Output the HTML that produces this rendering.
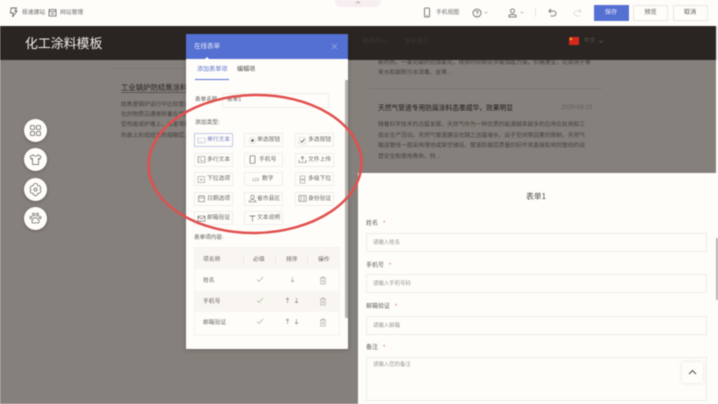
<!DOCTYPE html>
<html lang="zh-CN"><head><meta charset="utf-8"><title>化工涂料模板</title>
<style>
*{box-sizing:border-box;margin:0;padding:0}
html,body{width:718px;height:404px;overflow:hidden;background:#fffdfa}
body{font-family:"Liberation Sans","Noto Sans CJK SC",sans-serif;position:relative}
#w{position:absolute;left:0;top:0;width:718px;height:404px;filter:blur(.4px);overflow:hidden}
#w div,#w svg{position:absolute}
.t{white-space:nowrap;line-height:1;margin-top:1px}
.bt{border:1px solid #f0eeea;width:39px;height:14px;background:#fffdfa;font-size:5.8px;color:#6a6663;line-height:13px;padding-left:12px;white-space:nowrap}
.bt svg{left:1.5px;top:1.5px}
.m svg{left:2.5px}
.in{border:1px solid #eeece8;background:#fffdfa;left:366px;width:341px;font-size:5.4px;color:#9a9794;padding:7px 6px;line-height:1}
.lb{left:366px;font-size:6px;color:#5f5b58;white-space:nowrap;line-height:1;margin-top:1.5px}
.lb b{color:#e0707a;font-weight:400;margin-left:5px}
.rb{left:23.5px;width:23px;height:23px;border-radius:50%;background:#fffdfa;box-shadow:0 1px 3px rgba(40,30,30,.35)}
.rb svg{left:5px;top:5px}
.p{font-size:5.75px;color:#45403d;line-height:1;white-space:nowrap;margin-top:2.5px}
.btn{top:5px;height:16px;width:35px;border:1px solid #e9e7e3;font-size:6.2px;line-height:14.500px;text-align:center;color:#5d5957;background:#fffdfa}
.c{font-size:5.8px;color:#6a6663;line-height:1;white-space:nowrap;margin-top:2.5px}
</style></head><body><div id="w">

<div style="left:0;top:26px;width:718px;height:378px;background:#85807b"></div>
<div style="left:358px;top:173px;width:360px;height:231px;background:#fffdfa"></div>
<div style="left:716px;top:26px;width:2px;height:378px;background:#fffdfa"></div>

<!-- left article -->
<div style="left:113px;top:68px;width:73px;height:1px;background:#7a7571"></div>
<div class="t" style="left:121px;top:83px;font-size:7.4px;color:#26211f;border-bottom:1px solid #5a5552;padding-bottom:.5px">工业锅炉防结焦涂料：</div>
<div class="p" style="left:121px;top:100.500px">结焦是锅炉运行中比较普遍的现象</div>
<div class="p" style="left:121px;top:110.500px">化的物质沿通常附着在受热面上形</div>
<div class="p" style="left:121px;top:120.500px">受热面或炉墙上，或者堆积在炉膛</div>
<div class="p" style="left:121px;top:131px">热面上形成结渣的熔融层，</div>

<!-- right article -->
<div class="p" style="left:378px;top:58px">新的热，一氯化碳的抗蚀氧化，排放时抑制化学腐蚀能力强，价格便宜，论说用于脊</div>
<div class="p" style="left:378px;top:68px">来水和面附污水消毒、皮革...</div>
<div style="left:370px;top:88px;width:232px;height:1px;background:#7a7571"></div>
<div class="t" style="left:378px;top:104.500px;font-size:6.75px;color:#1c1816">天然气管道专用防腐涂料态墨威华，效果明显</div>
<div class="t" style="left:561px;top:103.500px;font-size:6.2px;color:#5f5a57">2020-03-21</div>
<div class="p" style="left:378px;top:120.500px">随着科学技术的迅猛发展，天然气作为一种优质的能源越来越多的应用在民用和工</div>
<div class="p" style="left:378px;top:131px">商业生产活动。天然气管道建设也随之迅猛增长。由于空间等因素的限制，天然气</div>
<div class="p" style="left:378px;top:141.500px">输送管线一般采用埋地或架空铺设。管道防腐层质量的好坏将直接影响到管线的运</div>
<div class="p" style="left:378px;top:152px">营安全和使用寿命。特...</div>

<!-- dark header -->
<div style="left:0;top:26px;width:716px;height:34px;background:#2a2522"></div>
<div style="left:716px;top:26px;width:2px;height:34px;background:#e8e6e2"></div>
<div class="t" style="left:25px;top:36.500px;font-size:12.9px;color:#eeebe6">化工涂料模板</div>
<div class="t" style="left:363px;top:37.500px;font-size:6px;color:#3d3835">新闻中心</div>
<div class="t" style="left:405px;top:37.500px;font-size:6px;color:#3d3835">联系我们</div>
<div style="left:569px;top:37px;width:10px;height:8px;background:#d6281a"></div>
<div style="left:570px;top:38px;width:2px;height:2px;background:#e8c030"></div>
<div class="t" style="left:584px;top:37.500px;font-size:5.6px;color:#5f5955">中文</div>
<svg style="left:598px;top:39px" width="6" height="5" viewBox="0 0 6 5"><path d="M1 1.500 3 3.500 5 1.500" fill="none" stroke="#5a5552" stroke-width=".7"/></svg>

<!-- topbar -->
<div style="left:0;top:0;width:718px;height:26px;background:#fffdfa"></div>
<div style="left:335px;top:0;width:46px;height:7px;background:#f6eef0;border-radius:0 0 6px 6px"></div>
<svg style="left:355px;top:0" width="6" height="5" viewBox="0 0 6 5"><path d="M1 3.500 3 1.500 5 3.500" fill="none" stroke="#a8a4a2" stroke-width=".8"/></svg>
<svg style="left:9px;top:7px" width="9" height="11" viewBox="0 0 9 11"><path d="M2 1h5.500L6 4h2L3.500 10l.7-4H1.500z" fill="none" stroke="#6b6866" stroke-width=".9"/></svg>
<div class="t" style="left:22px;top:10px;font-size:5.8px;color:#6e6b69">极速建站</div>
<svg style="left:47.500px;top:8px" width="9" height="9" viewBox="0 0 9 9"><path d="M1 1.500h7v6.500H1zM1 3.500h7M3 5.800h3" fill="none" stroke="#5f5c5a" stroke-width=".8"/></svg>
<div class="t" style="left:60px;top:10px;font-size:5.8px;color:#6e6b69">网站管理</div>

<svg style="left:423px;top:7px" width="8" height="11" viewBox="0 0 8 11"><rect x="1.500" y="1" width="5" height="9" rx="1" fill="none" stroke="#5f5c5a" stroke-width=".8"/><path d="M3.200 8.600h1.600" stroke="#5f5c5a" stroke-width=".7"/></svg>
<div class="t" style="left:436px;top:10px;font-size:5.8px;color:#6e6b69">手机视图</div>
<svg style="left:472px;top:8px" width="10" height="10" viewBox="0 0 10 10"><circle cx="5" cy="5" r="4" fill="none" stroke="#5f5c5a" stroke-width=".8"/><path d="M3.800 4c0-1.500 2.400-1.500 2.400 0 0 1-1.200 1-1.200 2M5 7v.6" fill="none" stroke="#5f5c5a" stroke-width=".7"/></svg>
<svg style="left:484px;top:11px" width="4" height="3" viewBox="0 0 4 3"><path d="M.5.800 2 2.200 3.500.800" fill="none" stroke="#a5a2a0" stroke-width=".6"/></svg>
<svg style="left:507.500px;top:8px" width="9" height="10" viewBox="0 0 9 10"><circle cx="4.500" cy="3" r="2" fill="none" stroke="#5f5c5a" stroke-width=".8"/><path d="M1 9V7.300c1-1 6-1 7 0V9z" fill="none" stroke="#5f5c5a" stroke-width=".8"/></svg>
<svg style="left:520px;top:11px" width="4" height="3" viewBox="0 0 4 3"><path d="M.5.800 2 2.200 3.500.800" fill="none" stroke="#a5a2a0" stroke-width=".6"/></svg>
<div style="left:535px;top:8px;width:1px;height:9px;background:#e8e6e2"></div>
<svg style="left:547.500px;top:8px" width="9" height="9" viewBox="0 0 9 9"><path d="M3 1 1 3l2 2M1 3h4.500a2.400 2.400 0 0 1 0 5H2.500" fill="none" stroke="#5f5c5a" stroke-width=".8"/></svg>
<svg style="left:572.500px;top:8px" width="9" height="9" viewBox="0 0 9 9"><path d="M6 1l2 2-2 2M8 3H3.500a2.400 2.400 0 0 0 0 5h3" fill="none" stroke="#d8d6d3" stroke-width=".8"/></svg>
<div class="btn" style="left:593.500px;background:#5470d2;border-color:#5470d2;color:#e8ebf8">保存</div>
<div class="btn" style="left:633px">预览</div>
<div class="btn" style="left:672.500px">取消</div>

<!-- round tools -->
<div class="rb" style="top:119px"><svg width="13" height="13" viewBox="0 0 13 13"><g fill="none" stroke="#66625f" stroke-width=".8"><rect x="1.500" y="1.500" width="4" height="4" rx="1"/><rect x="7.500" y="1.500" width="4" height="4" rx="1"/><rect x="1.500" y="7.500" width="4" height="4" rx="1"/><rect x="7.500" y="7.500" width="4" height="4" rx="1"/></g></svg></div>
<div class="rb" style="top:148px"><svg width="13" height="13" viewBox="0 0 13 13"><path d="M4 1.800 1 3.500l1 2.500 1.500-.5V11.500h6V5.500L11 6l1-2.500-3-1.700c-.5 1.800-4.500 1.800-5 0z" fill="none" stroke="#66625f" stroke-width=".75"/></svg></div>
<div class="rb" style="top:177.500px"><svg width="13" height="13" viewBox="0 0 13 13"><path d="M4.200 2.700A2.300 2.300 0 0 1 8.800 2.700 2.300 2.300 0 0 1 11.100 6.500 2.300 2.300 0 0 1 8.800 10.300 2.300 2.300 0 0 1 4.200 10.300 2.300 2.300 0 0 1 1.900 6.500 2.300 2.300 0 0 1 4.200 2.700z" fill="none" stroke="#66625f" stroke-width=".75"/><circle cx="6.500" cy="6.500" r="1.500" fill="none" stroke="#66625f" stroke-width=".75"/></svg></div>
<div class="rb" style="top:206.500px"><svg width="13" height="13" viewBox="0 0 13 13"><g fill="none" stroke="#66625f" stroke-width=".7"><ellipse cx="4.600" cy="2.500" rx="1.100" ry="1.400"/><ellipse cx="8.400" cy="2.500" rx="1.100" ry="1.400"/><ellipse cx="1.900" cy="5.600" rx="1" ry="1.300"/><ellipse cx="11.100" cy="5.600" rx="1" ry="1.300"/><path d="M6.500 5.500c-1.500 0-3.600 2.600-3.600 4.200 0 1.700 2.100 1.500 3.600 1 1.500.5 3.600.7 3.600-1 0-1.600-2.100-4.200-3.600-4.200z"/></g></svg></div>

<!-- form preview -->
<div class="t" style="left:526px;top:191.500px;font-size:7.8px;color:#504c4a">表单1</div>
<div class="lb" style="top:219.500px">姓名<b>*</b></div>
<div class="in" style="top:233px;height:19px">请输入姓名</div>
<div class="lb" style="top:261px">手机号<b>*</b></div>
<div class="in" style="top:274px;height:19px">请输入手机号码</div>
<div class="lb" style="top:302.500px">邮箱验证<b>*</b></div>
<div class="in" style="top:315.500px;height:19px">请输入邮箱</div>
<div class="lb" style="top:343.500px">备注<b>*</b></div>
<div class="in" style="top:356.500px;height:44px;padding-top:5.500px">请输入您的备注</div>
<div style="left:682px;top:361.500px;width:21px;height:21px;background:#fffdfa;box-shadow:0 0 3px rgba(120,100,100,.22)"></div>
<svg style="left:687.500px;top:369px" width="9" height="6" viewBox="0 0 9 6"><path d="M1 5 4.500 1.500 8 5" fill="none" stroke="#55514f" stroke-width="1.100"/></svg>
<div style="left:716px;top:238px;width:2px;height:62px;background:#b5b2ae"></div>

<!-- modal -->
<div style="left:186px;top:34px;width:162px;height:315px;background:#fffdfa;border-radius:1px;box-shadow:0 1px 4px rgba(30,25,20,.25)"></div>
<div style="left:186px;top:34px;width:162px;height:25px;background:#5470d2;border-radius:1px 1px 0 0"></div>
<div class="t" style="left:194px;top:42.500px;font-size:6.5px;color:#e6e9f6">在线表单</div>
<svg style="left:330.500px;top:42.500px" width="7" height="7" viewBox="0 0 7 7"><path d="M1 1l5 5M6 1 1 6" stroke="#9aa9e2" stroke-width=".8"/></svg>
<div style="left:204px;top:57px;width:0;height:0;border:3px solid transparent;border-top:0;border-bottom-color:#fffdfa"></div>
<div class="t" style="left:197px;top:65.500px;font-size:6.1px;color:#5d76cf">添加表单项</div>
<div class="t" style="left:237px;top:65.500px;font-size:6.1px;color:#4f4b49">编辑项</div>
<div style="left:195px;top:78.500px;width:34px;height:1px;background:#5470d2"></div>
<div style="left:345px;top:80px;width:3px;height:238px;background:#b8b5b1"></div>

<div class="t" style="left:195px;top:96.500px;font-size:5.6px;color:#5f5b58">表单名称</div>
<div style="left:222px;top:93px;width:107px;height:15px;border:1px solid #f0eeea;font-size:5.6px;color:#5f5b58;padding:4px 4px;line-height:1">表单1</div>
<div class="t" style="left:195px;top:119.500px;font-size:5.8px;color:#5f5b58">添加类型:</div>

<div class="bt" style="left:194px;top:133px;border-color:#c3c9e6;color:#6b7cc4"><svg width="9" height="9" viewBox="0 0 9 9"><path d="M1 2h7v5H1zM2.500 5.500h3" fill="none" stroke="#b0b5d0" stroke-width=".6"/></svg>单行文本</div>
<div class="bt m" style="left:244px;top:133px"><svg width="9" height="9" viewBox="0 0 9 9"><circle cx="4.500" cy="4.500" r="3.300" fill="none" stroke="#d5d3d0" stroke-width=".6"/><circle cx="4.500" cy="4.500" r="1.300" fill="#55514f"/></svg>单选按钮</div>
<div class="bt" style="left:295px;top:133px"><svg width="9" height="9" viewBox="0 0 9 9"><rect x="1" y="1.500" width="6.500" height="6.500" fill="none" stroke="#d5d3d0" stroke-width=".6"/><path d="M2.500 4.800 4 6.200 6.500 3" fill="none" stroke="#55514f" stroke-width=".8"/></svg>多选按钮</div>

<div class="bt" style="left:194px;top:152.500px"><svg width="9" height="9" viewBox="0 0 9 9"><path d="M1 1.500h7v6H1zM2.500 3.500h2M2.500 5.500h4" fill="none" stroke="#7a7673" stroke-width=".6"/></svg>多行文本</div>
<div class="bt m" style="left:244px;top:152.500px;padding-left:14px"><svg width="9" height="9" viewBox="0 0 9 9"><rect x="2" y=".8" width="5" height="7.500" rx=".6" fill="none" stroke="#6a6663" stroke-width=".7"/></svg>手机号</div>
<div class="bt" style="left:295px;top:152.500px"><svg width="9" height="9" viewBox="0 0 9 9"><path d="M1 5v2.500h7V5M4.500 6V1.500M2.800 3.200l1.700-1.700 1.700 1.700" fill="none" stroke="#6a6663" stroke-width=".6"/></svg>文件上传</div>

<div class="bt" style="left:194px;top:172px"><svg width="9" height="9" viewBox="0 0 9 9"><rect x="1" y="1.500" width="6.500" height="6" fill="none" stroke="#9a9693" stroke-width=".6"/><path d="M3 4l1.200 1.200L5.500 4" fill="none" stroke="#7a7673" stroke-width=".6"/></svg>下拉选项</div>
<div class="bt" style="left:244px;top:172px;padding-left:17px"><span style="position:absolute;left:7px;top:0;font-size:4.2px;color:#8a8683">123</span>数字</div>
<div class="bt" style="left:295px;top:172px"><svg width="9" height="9" viewBox="0 0 9 9"><rect x="2" y="1" width="5" height="3" fill="none" stroke="#9a9693" stroke-width=".6"/><rect x="2" y="5" width="5" height="3" fill="none" stroke="#9a9693" stroke-width=".6"/></svg>多级下拉</div>

<div class="bt" style="left:194px;top:191.500px"><svg width="9" height="9" viewBox="0 0 9 9"><path d="M1.500 2.200h6v5.500h-6zM1.500 4h6M3 1v1.500M6 1v1.500" fill="none" stroke="#7a7673" stroke-width=".6"/></svg>日期选项</div>
<div class="bt m" style="left:244px;top:191.500px"><svg width="9" height="9" viewBox="0 0 9 9"><circle cx="4.500" cy="3" r="1.800" fill="none" stroke="#6a6663" stroke-width=".6"/><path d="M1 8c.5-3 6.500-3 7 0z" fill="none" stroke="#6a6663" stroke-width=".6"/></svg>省市县区</div>
<div class="bt" style="left:295px;top:191.500px"><svg width="9" height="9" viewBox="0 0 9 9"><path d="M.8 1.500h7.400v6H.8zM3 1.500v6M6 1.500v6" fill="none" stroke="#7a7673" stroke-width=".6"/></svg>身份验证</div>

<div class="bt" style="left:194px;top:211px"><svg width="9" height="9" viewBox="0 0 9 9"><path d="M1 2h7v5.200H1zM1 2.500l3.500 2.500L8 2.500" fill="none" stroke="#6a6663" stroke-width=".6"/></svg>邮箱验证</div>
<div class="bt m" style="left:244px;top:211px"><svg width="9" height="9" viewBox="0 0 9 9"><path d="M1.500 2h6M4.500 2v5.500" fill="none" stroke="#6a6663" stroke-width=".7"/></svg>文本说明</div>

<div class="t" style="left:194px;top:234.500px;font-size:5.6px;color:#5f5b58">表单项内容:</div>

<div style="left:194px;top:247px;width:146px;height:89px;border:1px solid #f5f3ef"></div>
<div style="left:195px;top:248px;width:144px;height:21px;background:#f9f6f2"></div>
<div style="left:195px;top:291px;width:144px;height:21px;background:#f9f6f2"></div>
<div class="c" style="left:203px;top:255px">项名称</div>
<div class="c" style="left:253px;top:255px">必填</div>
<div class="c" style="left:286px;top:255px">排序</div>
<div class="c" style="left:318px;top:255px">操作</div>
<div style="left:243px;top:255px;width:1px;height:8px;background:#ebe8e4"></div>
<div style="left:275px;top:255px;width:1px;height:8px;background:#ebe8e4"></div>
<div style="left:307px;top:255px;width:1px;height:8px;background:#ebe8e4"></div>
<div class="c" style="left:203px;top:276px">姓名</div>
<div class="c" style="left:203px;top:297px">手机号</div>
<div class="c" style="left:203px;top:318px">邮箱验证</div>

<svg style="left:256px;top:276px" width="8" height="7" viewBox="0 0 8 7"><path d="M1 3.500 3 5.500 7 1" fill="none" stroke="#a8b592" stroke-width=".7"/></svg>
<svg style="left:256px;top:297px" width="8" height="7" viewBox="0 0 8 7"><path d="M1 3.500 3 5.500 7 1" fill="none" stroke="#a8b592" stroke-width=".7"/></svg>
<svg style="left:256px;top:318px" width="8" height="7" viewBox="0 0 8 7"><path d="M1 3.500 3 5.500 7 1" fill="none" stroke="#a8b592" stroke-width=".7"/></svg>

<svg style="left:289.500px;top:276px" width="5" height="7" viewBox="0 0 5 7"><path d="M2.500 1v5M1 4.500 2.500 6 4 4.500" fill="none" stroke="#a09c99" stroke-width=".6"/></svg>
<svg style="left:285px;top:297px" width="5" height="7" viewBox="0 0 5 7"><path d="M2.500 6V1M1 2.500 2.500 1 4 2.500" fill="none" stroke="#85817e" stroke-width=".6"/></svg>
<svg style="left:293.500px;top:297px" width="5" height="7" viewBox="0 0 5 7"><path d="M2.500 1v5M1 4.500 2.500 6 4 4.500" fill="none" stroke="#85817e" stroke-width=".6"/></svg>
<svg style="left:285px;top:318px" width="5" height="7" viewBox="0 0 5 7"><path d="M2.500 6V1M1 2.500 2.500 1 4 2.500" fill="none" stroke="#85817e" stroke-width=".6"/></svg>
<svg style="left:293.500px;top:318px" width="5" height="7" viewBox="0 0 5 7"><path d="M2.500 1v5M1 4.500 2.500 6 4 4.500" fill="none" stroke="#85817e" stroke-width=".6"/></svg>

<svg style="left:319px;top:275.500px" width="8" height="9" viewBox="0 0 8 9"><path d="M1 2h6M3 2V1h2v1M1.700 2v6h4.600V2M3.300 3.500v3M4.700 3.500v3" fill="none" stroke="#b3b0ad" stroke-width=".7"/></svg>
<svg style="left:319px;top:296.500px" width="8" height="9" viewBox="0 0 8 9"><path d="M1 2h6M3 2V1h2v1M1.700 2v6h4.600V2M3.300 3.500v3M4.700 3.500v3" fill="none" stroke="#b3b0ad" stroke-width=".7"/></svg>
<svg style="left:319px;top:317.500px" width="8" height="9" viewBox="0 0 8 9"><path d="M1 2h6M3 2V1h2v1M1.700 2v6h4.600V2M3.300 3.500v3M4.700 3.500v3" fill="none" stroke="#b3b0ad" stroke-width=".7"/></svg>

<!-- red ellipse annotation -->
<svg style="left:0;top:0" width="718" height="404" viewBox="0 0 718 404"><ellipse cx="255" cy="164" rx="106.500" ry="69" transform="rotate(-1 255 164)" fill="none" stroke="#e0504e" stroke-width="2.500"/></svg>

</div></body></html>
